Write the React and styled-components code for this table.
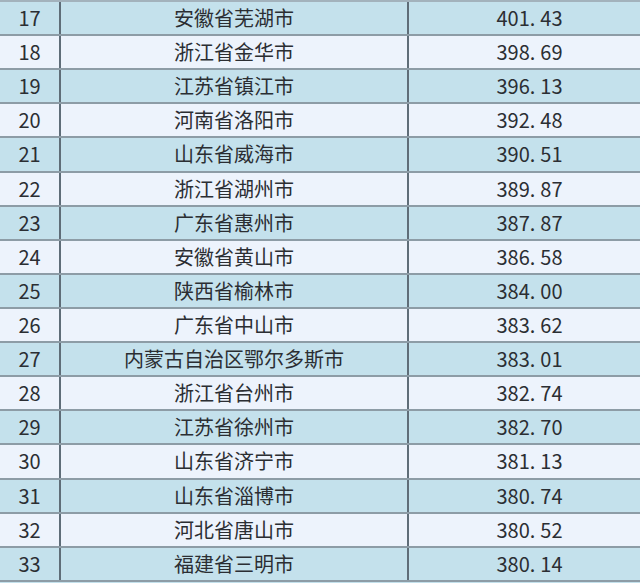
import styled, { createGlobalStyle } from "styled-components"

const GlobalStyle = createGlobalStyle`
  html, body {
    margin: 0;
    padding: 0;
    background: #c4e1ec;
    overflow: hidden;
  }
`

const rows = [
  ["17", "安徽省芜湖市", "401.43"],
  ["18", "浙江省金华市", "398.69"],
  ["19", "江苏省镇江市", "396.13"],
  ["20", "河南省洛阳市", "392.48"],
  ["21", "山东省威海市", "390.51"],
  ["22", "浙江省湖州市", "389.87"],
  ["23", "广东省惠州市", "387.87"],
  ["24", "安徽省黄山市", "386.58"],
  ["25", "陕西省榆林市", "384.00"],
  ["26", "广东省中山市", "383.62"],
  ["27", "内蒙古自治区鄂尔多斯市", "383.01"],
  ["28", "浙江省台州市", "382.74"],
  ["29", "江苏省徐州市", "382.70"],
  ["30", "山东省济宁市", "381.13"],
  ["31", "山东省淄博市", "380.74"],
  ["32", "河北省唐山市", "380.52"],
  ["33", "福建省三明市", "380.14"],
]

// Table
const Table = styled.div`
  width: 640px;
  border-top: 2px solid #a3b2bc;
  font-family: "Noto Sans CJK SC", "Noto Sans", sans-serif;
  font-size: 20px;
  color: #2b2e33;
`

const Row = styled.div`
  display: grid;
  grid-template-columns: 61px 348px 1fr;
  height: 34.12px;
  box-sizing: border-box;
  border-bottom: 2px solid #8d9ca6;
  background: ${(p) => (p.$shaded ? "#c4e1ec" : "#edf3fc")};
`

const Cell = styled.div`
  display: flex;
  align-items: center;
  justify-content: center;
  padding-left: ${(p) => p.$shift || 0}px;
  border-right: ${(p) => (p.$last ? "none" : "2px solid #5f6d78")};
  line-height: 1;
`

const Dot = styled.span`
  margin-right: 5px;
`

function Value({ text }) {
  const [a, b] = text.split(".")
  return (
    <>
      {a}
      <Dot>.</Dot>
      {b}
    </>
  )
}

function App() {
  return (
    <>
      <GlobalStyle />
      <Table>
        {rows.map(([rank, city, value], i) => (
          <Row key={rank} $shaded={i % 2 === 0}>
            <Cell>{rank}</Cell>
            <Cell>{city}</Cell>
            <Cell $last $shift={10}>
              <Value text={value} />
            </Cell>
          </Row>
        ))}
      </Table>
    </>
  )
}

export default App
